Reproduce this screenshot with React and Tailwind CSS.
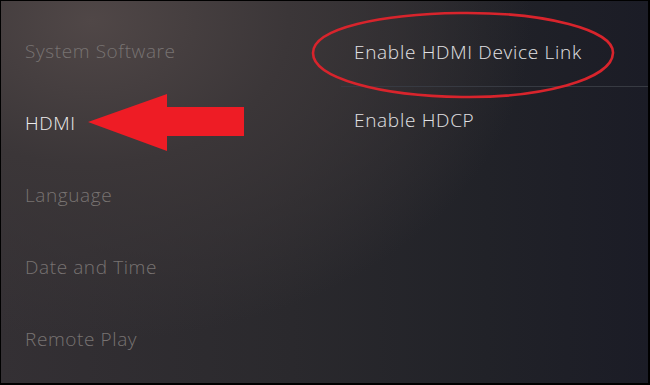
import React from 'react';

const leftItems = [
  { label: 'System Software', active: false },
  { label: 'HDMI', active: true },
  { label: 'Language', active: false },
  { label: 'Date and Time', active: false },
  { label: 'Remote Play', active: false },
];

const rightItems = ['Enable HDMI Device Link', 'Enable HDCP'];

const App = () => {
  return (
    <div className="relative w-[650px] h-[385px] overflow-hidden bg-black font-['Open_Sans',sans-serif]">
      <div className="absolute inset-0 border-l border-t border-r-2 border-b-2 border-black bg-[radial-gradient(ellipse_440px_320px_at_90px_20px,#504747_0%,#3b3638_45%,rgba(42,41,45,0)_100%),linear-gradient(90deg,#343034_0%,#2a292d_45%,#212228_75%,#1b1c26_100%)]">
        <div className="flex h-full">
          {/* left menu */}
          <div className="w-[340px] pt-[14px] pl-6">
            {leftItems.map((item) => (
              <div key={item.label} className="h-[72px] flex items-center">
                <span
                  className={
                    item.active
                      ? 'text-[19px] font-light text-[#ececec] tracking-[0.6px]'
                      : 'text-[19px] font-light text-[#787372] tracking-[0.6px]'
                  }
                >
                  {item.label}
                </span>
              </div>
            ))}
          </div>

          {/* right options */}
          <div className="flex-1 pt-[18px]">
            {rightItems.map((label, i) => (
              <div
                key={label}
                className={
                  i === 0
                    ? 'h-[68px] flex items-center pl-[13px] border-b border-[#373a42]'
                    : 'h-[66px] flex items-center pl-[13px]'
                }
              >
                <span className="text-[19px] font-light text-[#e2e2e4] tracking-[0.7px]">{label}</span>
              </div>
            ))}
          </div>
        </div>
      </div>

      {/* annotations drawn over the screenshot */}
      <svg className="absolute inset-0 pointer-events-none" width="650" height="385" viewBox="0 0 650 385">
        <polygon
          points="88,122 167,94 167,107 244,107 244,136 167,136 167,151"
          fill="#ee1c25"
        />
        <path
          d="M 460 13 C 545 12, 614 30, 613 53 C 612 80, 540 98, 462 97 C 380 96, 313 78, 313 53 C 313 28, 382 14, 460 13 Z"
          fill="none"
          stroke="#d8242c"
          strokeWidth="2.6"
        />
      </svg>
    </div>
  );
};

export default App;
